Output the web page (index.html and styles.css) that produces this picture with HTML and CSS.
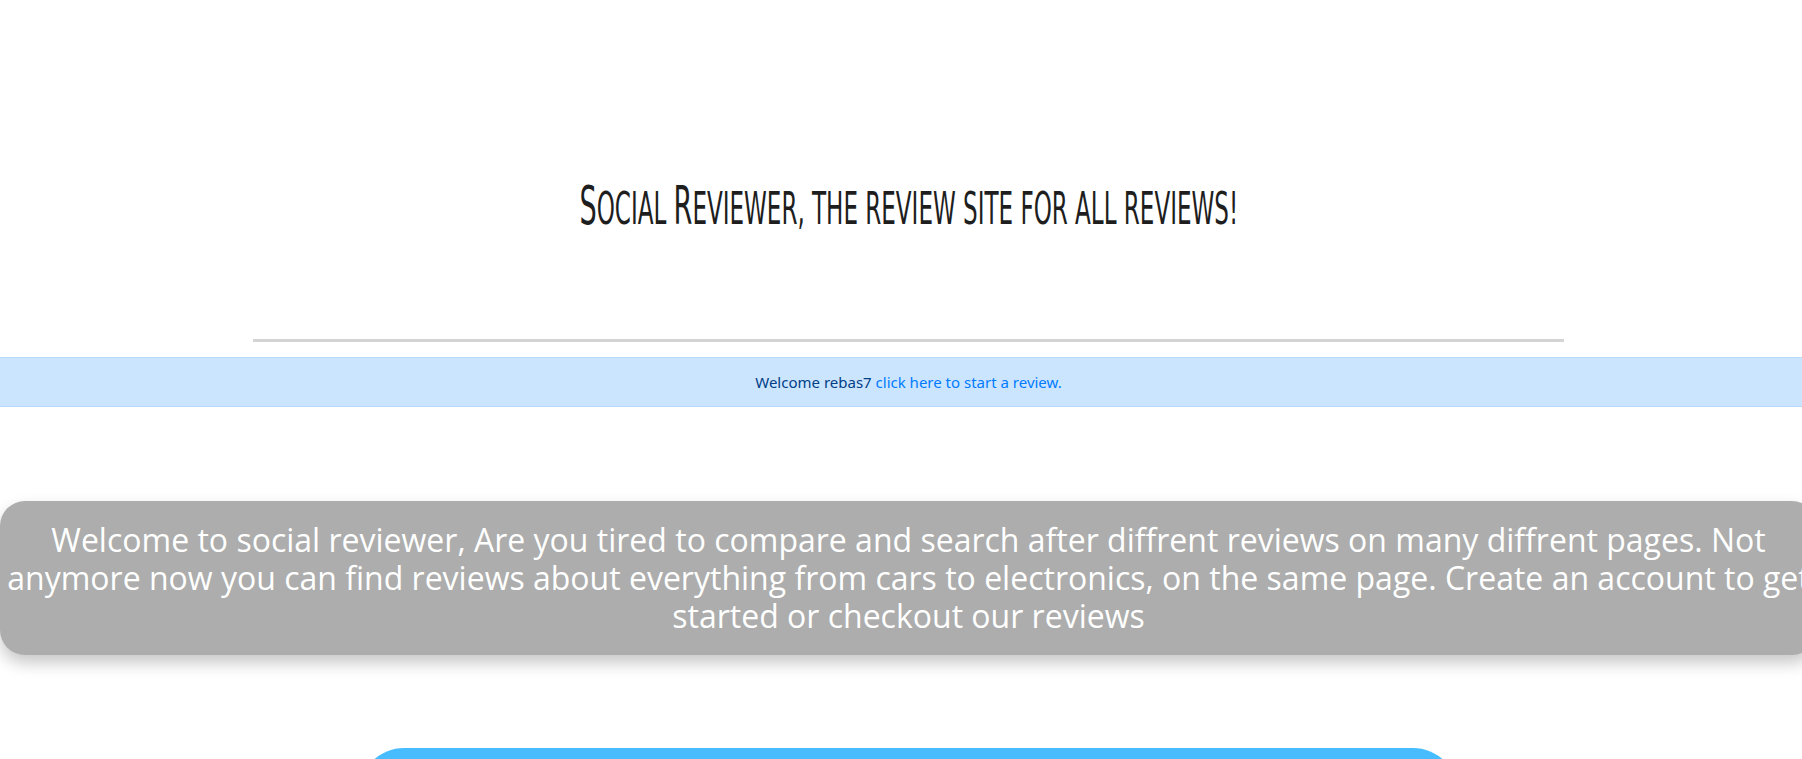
FILE: index.html
```html
<!DOCTYPE html>
<html lang="en">
<head>
<meta charset="utf-8">
<title>Social Reviewer</title>
<link rel="stylesheet" href="styles.css">
</head>
<body>
<div class="page">
  <header class="masthead">
    <h1 class="site-title"><span class="site-title-text"><span class="cap">S</span>ocial <span class="cap">R</span>eviewer, the review site for all reviews!</span></h1>
  </header>
  <hr class="divider">
  <div class="alert" role="alert">Welcome rebas7 <a href="#" class="alert-link">click here to start a review.</a></div>
  <section class="intro">
    <p class="intro-text">Welcome to social reviewer, Are you tired to compare and search after diffrent reviews on many diffrent pages. Not anymore now you can find reviews about everything from cars to electronics, on the same page. Create an account to get started or checkout our reviews</p>
  </section>
  <div class="cta"></div>
</div>
</body>
</html>
```

FILE: styles.css
```css
html, body {
  margin: 0;
  padding: 0;
  background: #ffffff;
  overflow: hidden;
}

.page {
  width: 1817px;
}

.masthead {
  padding-top: 179px;
  box-sizing: border-box;
  height: 339px;
}

.site-title {
  margin: 0;
  text-align: center;
  font-family: "DejaVu Sans Condensed", "DejaVu Sans", sans-serif;
  font-weight: normal;
  text-transform: uppercase;
  font-size: 45px;
  line-height: 53px;
  color: #1e1e1e;
}

.site-title .cap {
  font-size: 53px;
}

.site-title-text {
  display: inline-block;
  transform: scaleX(0.569);
  white-space: nowrap;
}

.divider {
  width: 72.2%;
  height: 3px;
  margin: 0 auto 15px;
  border: 0;
  background: #d4d4d4;
}

.alert {
  padding: 12px 20px;
  border-top: 1px solid #b8daff;
  border-bottom: 1px solid #b8daff;
  background: #cce5ff;
  color: #004085;
  font-family: "Noto Sans", "DejaVu Sans", sans-serif;
  font-size: 15px;
  line-height: 24px;
  text-align: center;
}

.alert-link {
  color: #007bff;
  text-decoration: none;
}

.intro {
  margin-top: 94px;
  border-radius: 25px;
  background: #acadac;
  box-shadow: 0 8px 16px rgba(0, 0, 0, 0.22);
  padding: 20px 0;
}

.intro-text {
  margin: 0;
  text-align: center;
  color: #ffffff;
  font-family: "Open Sans", "Liberation Sans", sans-serif;
  font-size: 32px;
  line-height: 38px;
}

.cta {
  width: 60.5%;
  height: 120px;
  margin: 93px auto 0;
  border-radius: 45px 45px 0 0;
  background: #47bcff;
}
```
